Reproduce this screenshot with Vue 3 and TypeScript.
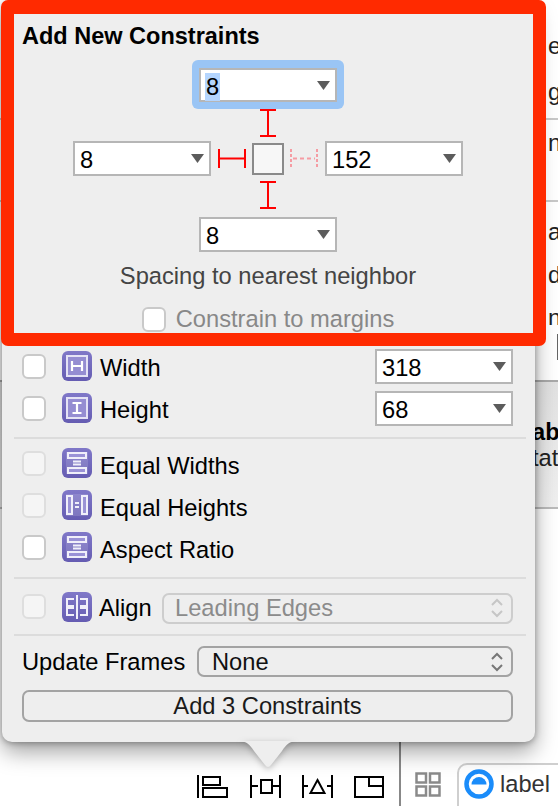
<script setup lang="ts">
interface SizeRow { label: string; value: string; icon: string }
interface RelRow { label: string; icon: string; dim: boolean }

const sizeRows: SizeRow[] = [
  { label: 'Width', value: '318', icon: 'width' },
  { label: 'Height', value: '68', icon: 'height' },
]
const relRows: RelRow[] = [
  { label: 'Equal Widths', icon: 'eqw', dim: true },
  { label: 'Equal Heights', icon: 'eqh', dim: true },
  { label: 'Aspect Ratio', icon: 'eqw', dim: false },
]
</script>

<template>
  <div class="page">
    <div class="side">
      <div class="side-sec s1"><span>e</span><span>g</span></div>
      <div class="side-sec s2"><span>n</span></div>
      <div class="side-sec s3"><span>a</span><span>d</span><span>nt</span></div>
      <div class="side-field"><i></i></div>
      <div class="side-gray"><b>ab</b><span>tati</span></div>
      <div class="side-rest"></div>
    </div>

    <div class="toolbar">
      <svg class="tb-icons" width="190" height="23" viewBox="0 0 190 23" fill="none" stroke="#000" stroke-width="2">
        <path d="M1 0v23M6 2h17v8H6zM6 13h24v9H6z" />
        <path d="M54 0v23M83 0v23M54 11h7M75 11h8M64 5h11v13H64z" />
        <path d="M106 0v23M135 0v23M106 11h5M130 11h5M120.500 5l7 13h-14z" />
        <path d="M158 2h28v20h-28zM172 2v9h14" />
      </svg>
      <div class="tb-sep"></div>
      <svg class="tb-grid" width="26" height="25" viewBox="0 0 26 25" fill="none" stroke="#8a8a8a" stroke-width="2.500">
        <rect x="1.500" y="1.500" width="9.500" height="9" />
        <rect x="15" y="1.500" width="9.500" height="9" />
        <rect x="1.500" y="14.500" width="9.500" height="9" />
        <rect x="15" y="14.500" width="9.500" height="9" />
      </svg>
      <div class="tb-label">
        <svg width="30" height="30" viewBox="0 0 30 30">
          <circle cx="15" cy="15" r="12.500" fill="none" stroke="#1a8cfa" stroke-width="4.500" />
          <path d="M7.500 15.500a7.500 7.500 0 0 1 15 0z" fill="#1a8cfa" />
        </svg>
        <span>label</span>
      </div>
    </div>

    <div class="popover">
      <h1 class="title">Add New Constraints</h1>
      <div class="cross">
        <div class="ring">
          <div class="combo">
            <span class="sel">8</span>
            <svg class="arrow" width="13" height="9" viewBox="0 0 13 9"><path d="M0 0h13L6.500 9z" /></svg>
          </div>
        </div>
        <svg class="strut-v top" width="18" height="28" viewBox="0 0 18 28" stroke="#ff0000" stroke-width="2"><path d="M1 1h16M9 1v26M1 27h16" /></svg>
        <div class="cross-mid">
          <div class="combo">
            <span>8</span>
            <svg class="arrow" width="13" height="9" viewBox="0 0 13 9"><path d="M0 0h13L6.500 9z" /></svg>
          </div>
          <svg class="strut-h" width="28" height="19" viewBox="0 0 28 19" stroke="#ff0000" stroke-width="2"><path d="M1 0v19M27 0v19M1 9.500h26" /></svg>
          <div class="view-box"></div>
          <svg class="strut-h dash" width="28" height="19" viewBox="0 0 28 19" stroke="#f59ca3" stroke-width="2"><path d="M1 0v19M27 0v19" stroke-dasharray="3 2" /><path d="M3 9.500h22" stroke-dasharray="4 3" /></svg>
          <div class="combo">
            <span>152</span>
            <svg class="arrow" width="13" height="9" viewBox="0 0 13 9"><path d="M0 0h13L6.500 9z" /></svg>
          </div>
        </div>
        <svg class="strut-v bottom" width="18" height="28" viewBox="0 0 18 28" stroke="#ff0000" stroke-width="2"><path d="M1 1h16M9 1v26M1 27h16" /></svg>
        <div class="combo">
          <span>8</span>
          <svg class="arrow" width="13" height="9" viewBox="0 0 13 9"><path d="M0 0h13L6.500 9z" /></svg>
        </div>
        <p class="hint">Spacing to nearest neighbor</p>
        <label class="margins"><i class="check"></i><span>Constrain to margins</span></label>
      </div>

      <div class="size-group">
        <div v-for="row in sizeRows" :key="row.label" class="row">
          <i class="check"></i>
          <svg class="pill" width="30" height="30" viewBox="0 0 30 30">
            <rect x="5" y="5" width="20" height="20" fill="#958dd2" stroke="#e4e2f5" stroke-width="2" />
            <path v-if="row.icon === 'width'" d="M10 10v10M20 10v10M10 15h10" stroke="#fff" stroke-width="2.200" fill="none" />
            <path v-else d="M10.500 10h9M10.500 20h9M15 10v10" stroke="#fff" stroke-width="2.200" fill="none" />
          </svg>
          <span class="row-label">{{ row.label }}</span>
          <div class="combo end">
            <span>{{ row.value }}</span>
            <svg class="arrow" width="13" height="9" viewBox="0 0 13 9"><path d="M0 0h13L6.500 9z" /></svg>
          </div>
        </div>
      </div>

      <div class="rel-group">
        <div v-for="row in relRows" :key="row.label" class="row">
          <i class="check" :class="{ dim: row.dim }"></i>
          <svg v-if="row.icon === 'eqw'" class="pill" width="30" height="30" viewBox="0 0 30 30">
            <rect x="4" y="4" width="22" height="22" fill="#fff" opacity="0.14" />
            <rect x="6" y="5" width="18" height="5" fill="#9a92d6" stroke="#f0effa" stroke-width="2" />
            <rect x="6" y="20" width="18" height="5" fill="#9a92d6" stroke="#f0effa" stroke-width="2" />
            <path d="M11 13.500h8M11 16.500h8" stroke="#f0effa" stroke-width="1.800" />
          </svg>
          <svg v-else class="pill" width="30" height="30" viewBox="0 0 30 30">
            <rect x="4" y="4" width="22" height="22" fill="#fff" opacity="0.14" />
            <rect x="5" y="6" width="5" height="18" fill="#9a92d6" stroke="#f0effa" stroke-width="2" />
            <rect x="20" y="6" width="5" height="18" fill="#9a92d6" stroke="#f0effa" stroke-width="2" />
            <path d="M13 13h4M13 17h4" stroke="#f0effa" stroke-width="1.800" />
          </svg>
          <span class="row-label">{{ row.label }}</span>
        </div>
      </div>

      <div class="align-row">
        <i class="check dim"></i>
        <svg class="pill" width="30" height="30" viewBox="0 0 30 30">
          <path d="M15 3v24" stroke="#f0effa" stroke-width="2" />
          <path d="M12 7H5v7h7M12 16H5v7h7M18 7h7v7h-7M18 16h7v7h-7" stroke="#f0effa" stroke-width="2" fill="none" />
        </svg>
        <span class="align-label">Align</span>
        <div class="popup disabled">
          <span>Leading Edges</span>
          <svg class="updown" width="12" height="20" viewBox="0 0 12 20" fill="none" stroke="#c6c6c6" stroke-width="2"><path d="M1 7l5-5 5 5M1 13l5 5 5-5" /></svg>
        </div>
      </div>

      <div class="update-row">
        <span class="update-label">Update Frames</span>
        <div class="popup wide">
          <span>None</span>
          <svg class="updown" width="12" height="20" viewBox="0 0 12 20" fill="none" stroke="#777" stroke-width="2"><path d="M1 7l5-5 5 5M1 13l5 5 5-5" /></svg>
        </div>
      </div>

      <button class="add" type="button">Add 3 Constraints</button>
    </div>

    <svg class="tail" width="60" height="27" viewBox="0 0 60 27">
      <path d="M0 0c9 0 12 4 16 10l11 14c2 2.500 4 2.500 6 0l11-14c4-6 7-10 16-10z" fill="#eeeeee" />
    </svg>

    <div class="frame"></div>
  </div>
</template>

<style>
html, body { margin: 0; padding: 0; background: #fff; }
</style>

<style scoped>
.page {
  position: relative;
  width: 558px;
  height: 806px;
  overflow: hidden;
  background: #fff;
  font-family: "Liberation Sans", Arial, sans-serif;
  font-size: 23.700px;
  color: #000;
  display: flex;
  flex-direction: column;
}
.side {
  height: 742px;
  display: flex;
  flex-direction: column;
  color: #222;
  line-height: 26px;
}
.side-sec {
  display: flex;
  flex-direction: column;
  padding-left: 548px;
  border-bottom: 2px solid #c8c8c8;
  box-sizing: border-box;
}
.s1 { height: 120px; padding-top: 33px; gap: 20px; }
.s2 { height: 82px; padding-top: 10px; }
.s3 { height: 123px; padding-top: 17px; gap: 17px; border-bottom: 0; overflow: hidden; }
.side-field {
  height: 57px;
  box-sizing: border-box;
  display: flex;
  align-items: center;
  justify-content: flex-end;
  border-bottom: 2px solid #aaa;
  background: #fff;
}
.side-field i { width: 1px; height: 26px; background: #666; margin-bottom: 12px; }
.side-gray {
  height: 127px;
  padding-left: 532px;
  padding-top: 37px;
  box-sizing: border-box;
  display: flex;
  flex-direction: column;
  background: linear-gradient(#e2e2e2, #f0f0f0);
  border-bottom: 2px solid #bbb;
}
.side-gray b { color: #000; }
.side-rest { flex: 1; }

.toolbar {
  height: 64px;
  display: flex;
  align-items: flex-start;
}
.tb-icons { margin: 33px 0 0 197px; flex: none; }
.tb-sep { width: 2px; height: 64px; background: #888; margin-left: 12px; flex: none; }
.tb-grid { margin: 30px 0 0 14px; flex: none; }
.tb-label {
  margin: 21px -40px 0 16px;
  flex: none;
  width: 170px;
  height: 60px;
  border: 2px solid #cfcfcf;
  border-radius: 10px;
  box-sizing: border-box;
  padding: 4px 0 0 5px;
  display: flex;
  align-items: flex-start;
  gap: 6px;
  color: #333;
}
.tb-label span { line-height: 30px; }

.popover {
  position: absolute;
  left: 2px;
  top: 0;
  width: 533px;
  height: 742px;
  box-sizing: border-box;
  padding: 0 22px 0 20px;
  background: #eeeeee;
  border-radius: 10px;
  box-shadow: 0 10px 22px rgba(0, 0, 0, 0.36), 0 1px 6px rgba(0, 0, 0, 0.32);
  display: flex;
  flex-direction: column;
}
.tail {
  position: absolute;
  left: 238px;
  top: 741px;
  filter: drop-shadow(0 2px 3px rgba(0, 0, 0, 0.25));
}
.title {
  margin: 22px 0 0;
  font-size: 23.500px;
  line-height: 28px;
  font-weight: 700;
  height: 28px;
}
.cross {
  margin-top: 18px;
  width: 492px;
  display: flex;
  flex-direction: column;
  align-items: center;
  height: 280px;
  flex: none;
}
.ring {
  padding: 8px 7px 7px;
  margin: -8px 0 -7px;
  background: #9ac5f5;
  border-radius: 6px;
  display: flex;
}
.combo {
  width: 138px;
  height: 35px;
  box-sizing: border-box;
  border: 2px solid #b6b6b6;
  background: #fff;
  padding-left: 5px;
  display: flex;
  align-items: center;
  justify-content: space-between;
  flex: none;
  line-height: 28px;
}
.combo > span { margin-top: 3px; }
.combo.end { margin-top: 1px; }
.ring .combo { height: 34px; }
.sel { background: #b4d5fe; padding: 0 1px; margin-left: -1px; }
.arrow { margin-right: 5px; fill: #5c5c5c; }
.strut-v { flex: none; }
.strut-v.top { margin: 7px 0 4px; }
.strut-v.bottom { margin: 5px 0 8px; }
.cross-mid {
  display: flex;
  align-items: center;
  height: 35px;
  flex: none;
}
.strut-h { margin: 0 6px 0 7px; flex: none; }
.strut-h.dash { margin: 0 7px 0 6px; }
.view-box {
  width: 32px;
  height: 32px;
  box-sizing: border-box;
  border: 2.500px solid #8a8a8a;
  background: #f7f7f7;
  flex: none;
}
.hint {
  margin: 11px 0 0;
  color: #444;
  line-height: 26px;
}
.margins {
  margin-top: 17px;
  display: flex;
  align-items: center;
  gap: 10px;
  color: #888;
  line-height: 26px;
}
.check {
  width: 24px;
  height: 25px;
  box-sizing: border-box;
  border: 2px solid #c9c9c9;
  border-radius: 6px;
  background: #fff;
  flex: none;
  display: block;
}
.check.dim { background: #f5f5f5; border-color: #dedede; }
.size-group {
  padding-bottom: 5px;
  margin: 0 -13px 0 -8px;
  padding-left: 8px;
  padding-right: 13px;
  border-bottom: 2px solid #dcdcdc;
  flex: none;
}
.row {
  height: 42px;
  display: flex;
  align-items: center;
  padding-bottom: 6px;
  box-sizing: border-box;
}
.pill {
  margin-left: 16px;
  flex: none;
  border-radius: 6px;
  background: linear-gradient(#8078c8, #655cb2);
}
.row-label { margin: 4px 0 0 8px; flex: 1; }
.rel-group .row-label { margin-top: 6px; }
.rel-group {
  margin: 0 -13px 0 -8px;
  padding: 6px 13px 6px 8px;
  border-bottom: 2px solid #dcdcdc;
  flex: none;
}
.align-row {
  height: 57px;
  margin: 0 -13px 0 -8px;
  padding: 0 13px 0 8px;
  display: flex;
  align-items: center;
  border-bottom: 2px solid #dcdcdc;
  box-sizing: border-box;
  flex: none;
}
.align-label { margin: 3px 0 0 7px; }
.popup {
  height: 31px;
  box-sizing: border-box;
  border: 2px solid #a3a3a3;
  border-radius: 7px;
  padding: 0 8px 0 13px;
  display: flex;
  align-items: center;
  justify-content: space-between;
  color: #111;
  margin-left: auto;
  flex: none;
}
.popup.disabled {
  width: 351px;
  margin-top: 3px;
  padding-left: 11px;
  border-color: #cdcdcd;
  color: #8b8b8b;
}
.popup.wide { width: 316px; }
.popup.wide > span, .update-label { margin-top: 1px; }
.updown { flex: none; }
.update-row {
  display: flex;
  align-items: center;
  padding-top: 10px;
  flex: none;
}
.add {
  margin-top: 13px;
  height: 32px;
  box-sizing: border-box;
  padding: 0;
  border: 2px solid #a3a3a3;
  border-radius: 7px;
  background: #eeeeee;
  font: inherit;
  color: #1a1a1a;
  flex: none;
}
.frame {
  position: absolute;
  left: 1px;
  top: 0;
  width: 545px;
  height: 346px;
  box-sizing: border-box;
  border: 13px solid #ff2a00;
  border-top-width: 14px;
  border-radius: 7px;
  pointer-events: none;
}
</style>
